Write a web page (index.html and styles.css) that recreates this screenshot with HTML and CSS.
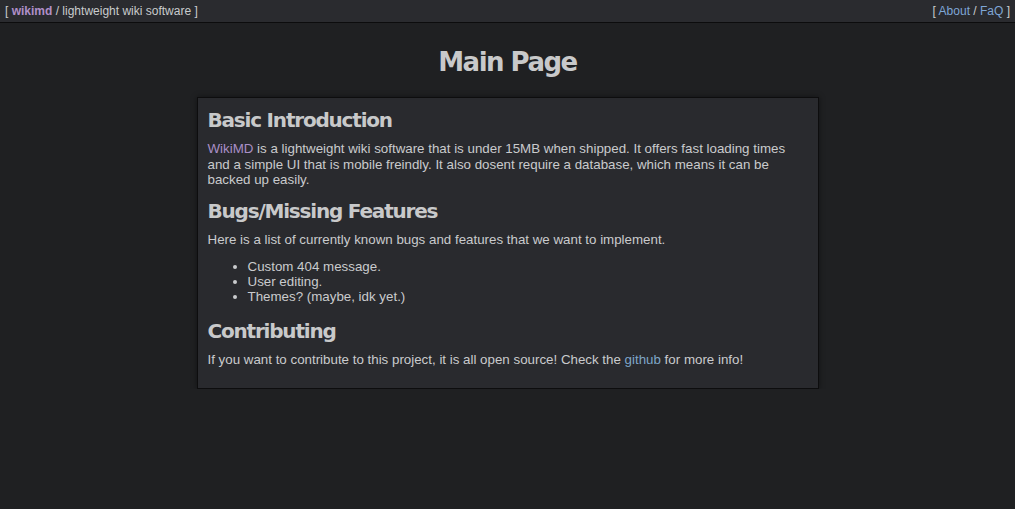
FILE: index.html
```html
<!DOCTYPE html>
<html>
<head>
<meta charset="utf-8">
<title>Main Page - wikimd</title>
<link rel="stylesheet" href="styles.css">
</head>
<body>
<header class="topbar">
  <div class="brand">[ <a class="site" href="#">wikimd</a> / lightweight wiki software ]</div>
  <nav class="links">[ <a href="#">About</a> / <a href="#">FaQ</a> ]</nav>
</header>
<main class="page">
  <h1 class="title">Main Page</h1>
  <article class="card">
    <h2 class="heading">Basic Introduction</h2>
    <p class="text"><a class="purple" href="#">WikiMD</a> is a lightweight wiki software that is under 15MB when shipped. It offers fast loading times and a simple UI that is mobile freindly. It also dosent require a database, which means it can be backed up easily.</p>
    <h2 class="heading">Bugs/Missing Features</h2>
    <p class="text">Here is a list of currently known bugs and features that we want to implement.</p>
    <ul class="list">
      <li>Custom 404 message.</li>
      <li>User editing.</li>
      <li>Themes? (maybe, idk yet.)</li>
    </ul>
    <h2 class="heading">Contributing</h2>
    <p class="text">If you want to contribute to this project, it is all open source! Check the <a class="blue" href="#">github</a> for more info!</p>
  </article>
</main>
</body>
</html>
```
FILE: styles.css
```css
html, body {
  margin: 0;
  padding: 0;
  background: #1f2022;
  color: #c9cbcd;
  font-family: "Liberation Sans", Arial, sans-serif;
  font-size: 13.333px;
}
a { text-decoration: none; }
.topbar {
  display: flex;
  justify-content: space-between;
  align-items: center;
  height: 22px;
  padding: 0 5px;
  background: #2a2b2f;
  border-bottom: 1px solid #0c0c0d;
  font-size: 12px;
  color: #c9cbcd;
}
.site {
  color: #b08fc8;
  font-weight: bold;
}
.links a { color: #7fa6d6; }
.page {
  display: flex;
  flex-direction: column;
  align-items: center;
}
.title {
  margin: 24px 0 20px;
  font-family: "DejaVu Sans", Verdana, sans-serif;
  font-weight: bold;
  font-size: 26px;
  line-height: 30px;
  letter-spacing: -1.5px;
  color: #c8c9ca;
}
.card {
  width: 600px;
  padding: 10px;
  background: #292a2e;
  border: 1px solid #0d0d0e;
  box-shadow: 0 0 6px rgba(0,0,0,0.45);
}
.heading {
  margin: 0;
  padding-top: 1px;
  font-family: "DejaVu Sans", Verdana, sans-serif;
  font-weight: bold;
  font-size: 20px;
  line-height: 23px;
  letter-spacing: -1.2px;
  color: #c8c9ca;
}
.text {
  margin: 9px 0 11px;
  line-height: 15.5px;
}
.list {
  margin: 12px 0 15px;
  padding-left: 40px;
  line-height: 15px;
}
.purple { color: #a98fc6; }
.blue { color: #7fa6c8; }
.card > .text:last-child { margin-bottom: 10px; }
```
